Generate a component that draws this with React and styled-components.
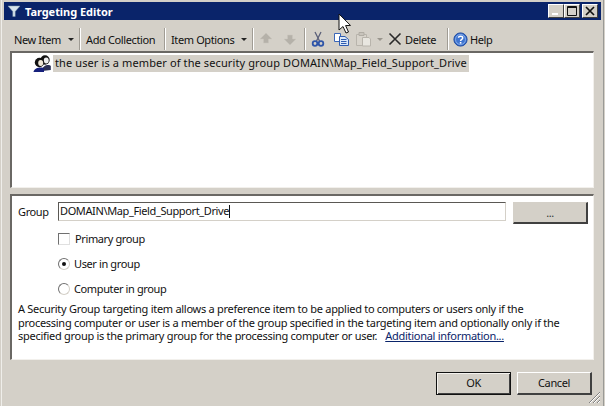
import React from "react";
import styled, { createGlobalStyle } from "styled-components";

const Global = createGlobalStyle`
  html, body { margin: 0; padding: 0; background: #d4d0c8; }
  * { box-sizing: border-box; }
`;

const Windowed = styled.div`
  width: 605px; height: 406px; background: #d4d0c8; padding: 2px 4px 0 4px;
  display: flex; flex-direction: column; position: relative; overflow: hidden;
  font-family: "Noto Sans", "DejaVu Sans", sans-serif; font-size: 11px; letter-spacing: -0.38px; color: #111;
  box-shadow: inset 1px 0 0 #d4d0c8, inset 2px 0 0 #efeeea, inset -1px 0 0 #d4d0c8, inset -2px 0 0 #9a9a96;
`;
const TitleBar = styled.div`
  height: 18px; background: #0a246a; color: #fff; display: flex; align-items: center;
  padding: 0 3px 0 3px; flex: none;
`;
const TitleText = styled.div`
  font-weight: 700; font-size: 11px; margin-left: 4px; flex: 1; letter-spacing: -0.05px;
`;
const WinBtns = styled.div`display: flex; gap: 0;`;
const WinBtn = styled.div`
  width: 16px; height: 14px; background: #d4d0c8; margin-left: ${p => p.$gap || 0}px;
  border: 1px solid; border-color: #fff #404040 #404040 #fff;
  display: flex; align-items: center; justify-content: center;
`;
const Toolbar = styled.div`
  height: 31px; display: flex; align-items: flex-end; padding: 0 0 1px 6px; flex: none;
`;
const ToolItem = styled.div`
  display: flex; align-items: center; height: 22px; white-space: nowrap; flex: none;
  width: ${p => p.$w}px;
  padding-left: ${p => p.$pl}px;
`;
const Sep = styled.div`
  width: 2px; height: 22px; border-left: 1px solid #a09c94; border-right: 1px solid #fff; flex: none;
`;
const Caret = styled.span`
  display: inline-block; width: 0; height: 0; margin-top: 1px; flex: none;
  margin-left: ${p => p.$ml}px;
  border-left: 3px solid transparent; border-right: 3px solid transparent;
  border-top: 3px solid ${p => p.$muted ? "#9a968e" : "#222"};
`;
const ToolIcon = styled.svg`
  flex: none; margin-left: ${p => p.$ml || 0}px;
`;
const ToolLabel = styled.span`
  margin-left: ${p => p.$ml}px;
`;
const TreePanel = styled.div`
  margin: 0 7px 0 6px; height: 137px; background: #fff; flex: none;
  border: 2px solid; border-color: #6a6864 #f2f0ec #f2f0ec #6a6864;
  border-right-width: 1px; border-bottom-width: 1px;
`;
const TreeRow = styled.div`
  display: flex; align-items: center; height: 17px; padding-left: 21px; margin-top: 2px;
`;
const TreeLabel = styled.div`
  background: #d4d0c8; height: 17px; line-height: 16px; padding: 0 2px; margin-left: 2px; letter-spacing: 0.11px;
`;
const DetailPanel = styled.div`
  margin: 6px 7px 0 6px; height: 166px; background: #fff; flex: none; padding: 6px 6px 0 6px;
  border: 2px solid; border-color: #6a6864 #f2f0ec #f2f0ec #6a6864;
  border-right-width: 1px; border-bottom-width: 1px;
`;
const GroupRow = styled.div`
  display: flex; align-items: flex-start; height: 22px;
`;
const GroupLabel = styled.div`width: 40px; flex: none; line-height: 20px;`;
const TextBox = styled.div`
  width: 448px; height: 19px; flex: none; padding: 0 0 3px 1px;
  border: 1px solid; border-color: #5a5854 #d4d0c8 #d4d0c8 #5a5854;
  display: flex; align-items: center;
`;
const CaretBar = styled.span`width: 1px; height: 13px; background: #111; margin-top: 3px;`;
const BrowseBtn = styled.div`
  width: 75px; height: 22px; margin-left: 7px; flex: none; background: #d4d0c8;
  text-align: center; line-height: 20px; color: #333;
  border: 1px solid; border-color: #d4d0c8 #404040 #404040 #d4d0c8; border-right-width: 2px; border-bottom-width: 2px;
`;
const Options = styled.div`
  display: flex; flex-direction: column; margin: 2px 0 0 40px;
`;
const Option = styled.label`
  display: flex; align-items: center; height: 25px;
`;
const CheckBox = styled.span`
  width: 12px; height: 12px; border: 1px solid; border-color: #707070 #e0e0e0 #e0e0e0 #707070;
  margin-right: 5px; flex: none; background: #fff;
`;
const Radio = styled.span`
  width: 12px; height: 12px; border-radius: 50%; margin-right: 4px; flex: none; background: #fff;
  border: 1px solid; border-color: #707070 #d4d0c8 #d4d0c8 #707070;
  display: flex; align-items: center; justify-content: center;
  &::after { content: ""; width: 4px; height: 4px; border-radius: 50%; background: ${p => p.$on ? "#111" : "transparent"}; }
`;
const Description = styled.div`
  margin-top: 1px; line-height: 13.5px; width: 548px; letter-spacing: -0.28px;
`;
const HelpLink = styled.a`
  color: #0a246a; text-decoration: underline; margin-left: 8px;
`;
const Footer = styled.div`
  flex: 1; display: flex; justify-content: flex-end; gap: 6px; padding: 12px 9px 0 0; position: relative;
`;
const DialogBtn = styled.div`
  width: 75px; height: 23px; background: #d4d0c8; text-align: center; line-height: 20px;
  border: 1px solid; border-color: #fff #404040 #404040 #fff;
  ${p => p.$primary
    ? "border-color: #111; box-shadow: inset 1px 1px 0 #f4f2ee, inset -1px -1px 0 #404040;"
    : "border-bottom-width:2px; border-right-width:2px;"}
`;
const Grip = styled.svg`position: absolute; right: 0; bottom: 2px;`;
const Cursor = styled.svg`position: absolute; left: 338px; top: 13px;`;

const Arrow = ({ d, ml }) => (
  <ToolIcon $ml={ml} width="14" height="14" viewBox="0 0 14 14">
    <path d={d} fill="#b5b1a9" stroke="#c8c4bc" strokeWidth="0.5" />
  </ToolIcon>
);

export default function App() {
  return (
    <Windowed>
      <Global />
      <TitleBar>
        <svg width="14" height="14" viewBox="0 0 14 14">
          <path d="M1 2 H13 L8.2 7.5 V12.5 H5.8 V7.5 Z" fill="#d8e4ec" stroke="#7f98a8" strokeWidth="0.5" />
        </svg>
        <TitleText>Targeting Editor</TitleText>
        <WinBtns>
          <WinBtn>
            <svg width="10" height="10" viewBox="0 0 10 10"><rect x="1" y="7" width="6" height="2" fill="#fff" /></svg>
          </WinBtn>
          <WinBtn>
            <svg width="10" height="10" viewBox="0 0 10 10"><path d="M0.5 0.5 H9.5 V9.5 H0.5 Z M0.5 1.5 H9.5" fill="none" stroke="#111" /></svg>
          </WinBtn>
          <WinBtn $gap={2}>
            <svg width="10" height="10" viewBox="0 0 10 10"><path d="M1 1 L9 9 M9 1 L1 9" stroke="#111" strokeWidth="1.7" /></svg>
          </WinBtn>
        </WinBtns>
      </TitleBar>
      <Toolbar>
        <ToolItem $w={69} $pl={4}>New Item<Caret $ml={7} /></ToolItem>
        <Sep />
        <ToolItem $w={83} $pl={5}>Add Collection</ToolItem>
        <Sep />
        <ToolItem $w={86} $pl={5}>Item Options<Caret $ml={7} /></ToolItem>
        <Sep />
        <ToolItem $w={50} $pl={5}>
          <Arrow d="M7 1 L13 7 H9.5 V11 H4.5 V7 H1 Z" />
          <Arrow ml={10} d="M7 13 L13 7 H9.5 V3 H4.5 V7 H1 Z" />
        </ToolItem>
        <Sep />
        <ToolItem $w={141} $pl={4}>
          <ToolIcon width="16" height="16" viewBox="0 0 16 16">
            <path d="M5 1 L9.5 10 M11 1 L6.5 10" stroke="#5a5f78" strokeWidth="1.3" fill="none" />
            <circle cx="5" cy="12.5" r="2.3" fill="none" stroke="#2f55a8" strokeWidth="1.8" />
            <circle cx="11" cy="12.5" r="2.3" fill="none" stroke="#2f55a8" strokeWidth="1.8" />
          </ToolIcon>
          <ToolIcon $ml={7} width="16" height="14" viewBox="0 0 16 14">
            <path d="M1.5 1.5 H7.5 V9.5 H1.5 Z" fill="#fff" stroke="#3a66b8" />
            <path d="M6.5 4.5 H12 L15.5 7.5 V13.5 H6.5 Z" fill="#dbe8f8" stroke="#2f5cb0" />
            <path d="M8 7.5 H13.5 M8 9.5 H13.5 M8 11.5 H13.5" stroke="#2f5cb0" />
          </ToolIcon>
          <ToolIcon $ml={6} width="17" height="16" viewBox="0 0 17 16">
            <path d="M1.5 3.5 H11.5 V14.5 H1.5 Z" fill="#d8d4cc" stroke="#b8b4ac" />
            <path d="M4 1.5 H9 V4.5 H4 Z" fill="#c8c4bc" stroke="#b0aca4" />
            <path d="M7.5 6.5 H14 L15.5 8 V15 H7.5 Z" fill="#e8e6e0" stroke="#b8b4ac" />
          </ToolIcon>
          <Caret $muted $ml={5} />
          <ToolIcon $ml={5} width="14" height="14" viewBox="0 0 14 14">
            <path d="M1.5 1.5 L12.5 12.5 M12.5 1.5 L1.5 12.5" stroke="#2a2a2a" strokeWidth="1.6" />
          </ToolIcon>
          <ToolLabel $ml={3}>Delete</ToolLabel>
        </ToolItem>
        <Sep />
        <ToolItem $w={50} $pl={4}>
          <ToolIcon width="15" height="15" viewBox="0 0 15 15">
            <circle cx="7.5" cy="7.5" r="6.6" fill="#3f74d0" stroke="#1f4aa0" />
            <circle cx="7.5" cy="7.5" r="5" fill="none" stroke="#9fc0f0" strokeWidth="0.7" />
            <path d="M5.4 5.8 C5.6 3.6 9.8 3.6 9.7 6 C9.6 7.4 7.7 7.4 7.6 9" fill="none" stroke="#fff" strokeWidth="1.5" />
            <rect x="6.8" y="10" width="1.6" height="1.6" fill="#fff" />
          </ToolIcon>
          <ToolLabel $ml={2}>Help</ToolLabel>
        </ToolItem>
      </Toolbar>
      <TreePanel>
        <TreeRow>
          <svg width="18" height="17" viewBox="0 0 18 17">
            <circle cx="12" cy="5" r="4.7" fill="#111" />
            <ellipse cx="13.2" cy="5.6" rx="2.5" ry="3" fill="#eee" />
            <path d="M9 16 C9 10 16 9 17.8 11 V15 Z" fill="#2a2f55" />
            <circle cx="6.5" cy="7.5" r="4.7" fill="#111" />
            <ellipse cx="7.7" cy="8" rx="2.5" ry="3" fill="#f0e8d8" />
            <path d="M0.5 17 C1 12 10 11.5 11 13.5 V17 Z" fill="#16207c" />
          </svg>
          <TreeLabel>the user is a member of the security group DOMAIN\Map_Field_Support_Drive</TreeLabel>
        </TreeRow>
      </TreePanel>
      <DetailPanel>
        <GroupRow>
          <GroupLabel>Group</GroupLabel>
          <TextBox>DOMAIN\Map_Field_Support_Drive<CaretBar /></TextBox>
          <BrowseBtn>...</BrowseBtn>
        </GroupRow>
        <Options>
          <Option><CheckBox />Primary group</Option>
          <Option><Radio $on />User in group</Option>
          <Option><Radio />Computer in group</Option>
        </Options>
        <Description>
          A Security Group targeting item allows a preference item to be applied to computers or users only if the processing computer or user is a member of the group specified in the targeting item and optionally only if the specified group is the primary group for the processing computer or user.
          <HelpLink>Additional information...</HelpLink>
        </Description>
      </DetailPanel>
      <Footer>
        <DialogBtn $primary>OK</DialogBtn>
        <DialogBtn>Cancel</DialogBtn>
        <Grip width="14" height="14" viewBox="0 0 14 14">
          <path d="M13 2 L2 13 M13 6 L6 13 M13 10 L10 13" stroke="#808080" strokeWidth="1" />
          <path d="M13 3 L3 13 M13 7 L7 13 M13 11 L11 13" stroke="#fff" strokeWidth="1" />
        </Grip>
      </Footer>
      <Cursor width="14" height="22" viewBox="0 0 14 22">
        <path d="M1 1 V17 L5 13.5 L8 20 L10.5 19 L7.6 12.6 L12.5 12.4 Z" fill="#fff" stroke="#111" strokeWidth="1" />
      </Cursor>
    </Windowed>
  );
}
